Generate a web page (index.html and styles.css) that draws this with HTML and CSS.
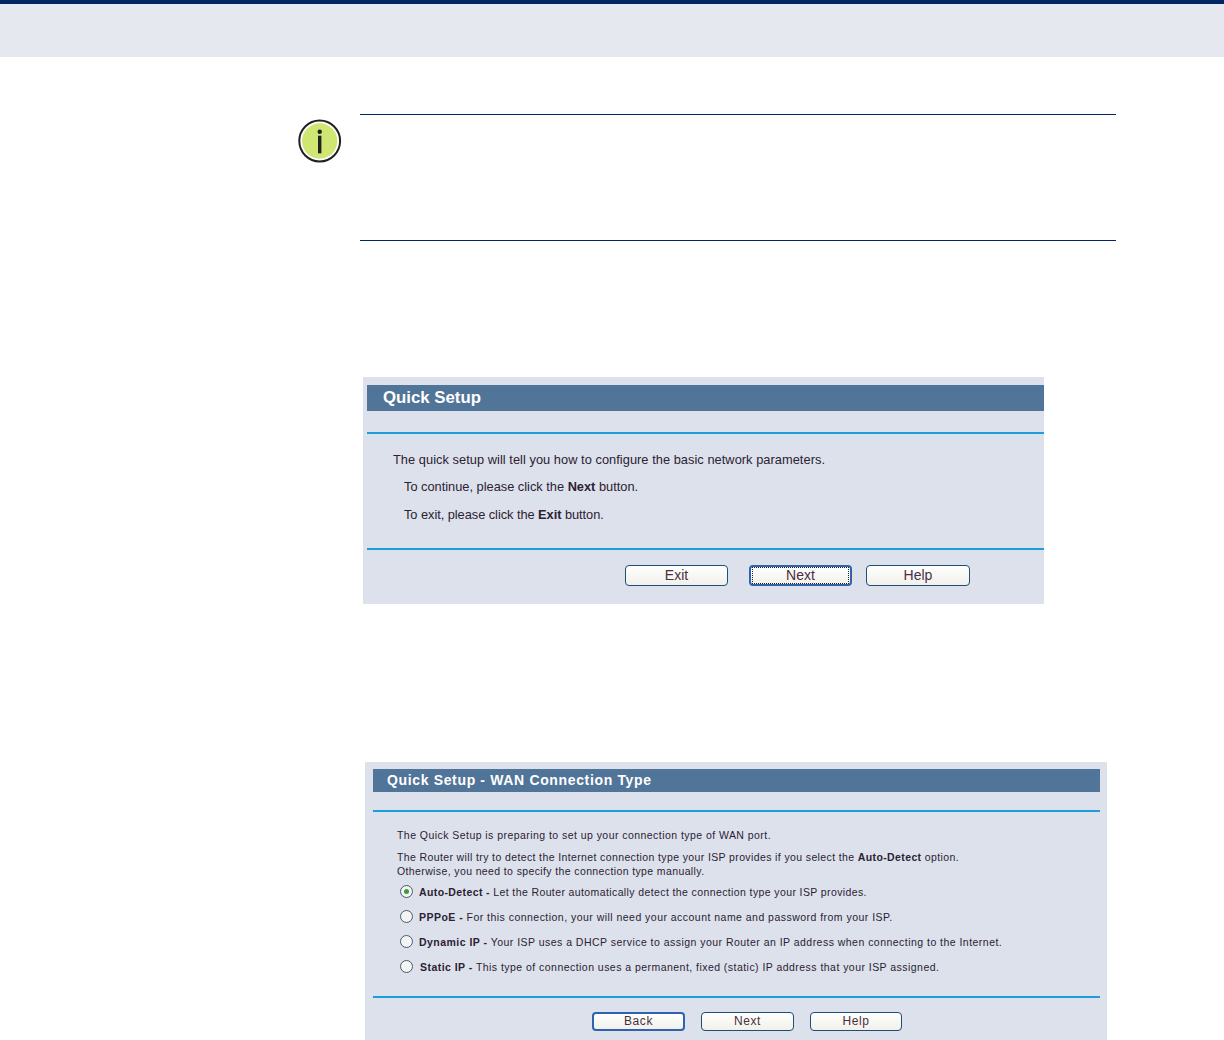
FILE: index.html
```html
<!DOCTYPE html>
<html lang="en">
<head>
<meta charset="utf-8">
<title>Quick Setup</title>
<link rel="stylesheet" href="styles.css">
</head>
<body>
<header class="page-head"></header>
<main class="page">
  <section class="note">
    <svg class="note-icon" width="44" height="44" viewBox="0 0 44 44" aria-hidden="true">
      <circle cx="21.7" cy="22" r="20.4" fill="#fff" stroke="#231f20" stroke-width="2"/>
      <circle cx="21.7" cy="22" r="17.7" fill="#cfe673"/>
      <circle cx="21.7" cy="12.8" r="2.2" fill="#231f20"/>
      <rect x="20" y="16.7" width="3.4" height="17.6" fill="#231f20"/>
    </svg>
    <div class="note-body"></div>
  </section>

  <section class="panel panel-a">
    <h2 class="panel-title">Quick Setup</h2>
    <div class="panel-main">
      <p class="line lead">The quick setup will tell you how to configure the basic network parameters.</p>
      <p class="line sub">To continue, please click the <b>Next</b> button.</p>
      <p class="line sub sub-exit">To exit, please click the <b>Exit</b> button.</p>
    </div>
    <div class="actions">
      <button class="btn" type="button">Exit</button>
      <button class="btn btn-focus" type="button"><span class="focus-ring">Next</span></button>
      <button class="btn btn-help" type="button">Help</button>
    </div>
  </section>

  <section class="panel panel-b">
    <h2 class="panel-title">Quick Setup - WAN Connection Type</h2>
    <div class="panel-main">
      <p class="para">The Quick Setup is preparing to set up your connection type of WAN port.</p>
      <p class="para para-two">The Router will try to detect the Internet connection type your ISP provides if you select the <b>Auto-Detect</b> option.<br>Otherwise, you need to specify the connection type manually.</p>
      <ul class="options">
        <li class="option option-tight"><span class="radio radio-on"></span><span><b>Auto-Detect -</b> Let the Router automatically detect the connection type your ISP provides.</span></li>
        <li class="option"><span class="radio"></span><span><b>PPPoE -</b> For this connection, your will need your account name and password from your ISP.</span></li>
        <li class="option"><span class="radio"></span><span><b>Dynamic IP -</b> Your ISP uses a DHCP service to assign your Router an IP address when connecting to the Internet.</span></li>
        <li class="option option-shift"><span class="radio"></span><span><b>Static IP -</b> This type of connection uses a permanent, fixed (static) IP address that your ISP assigned.</span></li>
      </ul>
    </div>
    <div class="actions">
      <button class="btn btn-default" type="button">Back</button>
      <button class="btn" type="button">Next</button>
      <button class="btn btn-last" type="button">Help</button>
    </div>
  </section>
</main>
</body>
</html>
```
FILE: styles.css
```css
html, body {
  margin: 0;
  padding: 0;
  background: #fff;
}
body {
  height: 1040px;
  overflow: hidden;
  font-family: "Liberation Sans", Arial, sans-serif;
  color: #2b2233;
}
.page-head {
  height: 53px;
  background: #e6e8f0;
  border-top: 4px solid #002663;
}
.page {
  display: flex;
  flex-direction: column;
  align-items: flex-start;
}

/* Note */
.note {
  display: flex;
  margin: 57px 0 0 298px;
}
.note-icon {
  flex: none;
  margin: 5px 18px 0 0;
}
.note-body {
  width: 756px;
  height: 125px;
  border-top: 1px solid #002663;
  border-bottom: 1px solid #002663;
}

/* Panels */
.panel {
  background: #dce1eb;
}
.panel-title {
  margin: 0;
  background: #517499;
  color: #fff;
  font-weight: 700;
}
.panel-main {
  border-top: 2px solid #1b9fd8;
  border-bottom: 2px solid #1b9fd8;
}
.panel-main p {
  margin: 0;
}
.actions {
  display: flex;
}
.btn {
  box-sizing: border-box;
  padding: 0;
  background: linear-gradient(#fff, #f1f0ea);
  border: 1px solid #1f4e79;
  border-radius: 4px;
  color: #4a2f3f;
  font-family: "Liberation Sans", Arial, sans-serif;
}

/* First panel */
.panel-a {
  box-sizing: border-box;
  width: 681px;
  height: 227px;
  margin: 136px 0 0 363px;
  padding: 8px 0 0 4px;
}
.panel-a .panel-title {
  height: 26px;
  padding-left: 16px;
  font-size: 16.8px;
  line-height: 25px;
}
.panel-a .panel-main {
  box-sizing: border-box;
  height: 118px;
  margin-top: 21px;
  padding-top: 12px;
}
.line {
  font-size: 12.8px;
  line-height: 27.3px;
}
.lead {
  padding-left: 26px;
  letter-spacing: 0.05px;
}
.sub {
  padding-left: 37px;
}
.sub-exit {
  letter-spacing: -0.04px;
}
.panel-a .actions {
  margin: 15px 0 0 258px;
}
.panel-a .btn {
  width: 103px;
  height: 21px;
  margin-right: 21px;
  font-size: 14px;
  line-height: 19px;
}
.panel-a .btn-help {
  width: 104px;
  margin-left: -7px;
}
.btn-focus {
  border: 2px solid #2f63b0;
  padding: 0 1px 1px;
}
.focus-ring {
  display: block;
  height: 15px;
  line-height: 15px;
  border: 1px dotted #222;
}

/* Second panel */
.panel-b {
  box-sizing: border-box;
  width: 742px;
  height: 278px;
  margin: 158px 0 0 365px;
  padding: 7px 7px 0 8px;
}
.panel-b .panel-title {
  height: 23px;
  padding-left: 14px;
  font-size: 14px;
  line-height: 23px;
  letter-spacing: 0.65px;
}
.panel-b .panel-main {
  box-sizing: border-box;
  height: 188px;
  margin-top: 18px;
  padding: 16px 0 0 24px;
  font-size: 10.5px;
  letter-spacing: 0.47px;
}
.para {
  line-height: 14px;
  letter-spacing: 0.45px;
}
.para-two {
  margin-top: 8px !important;
  letter-spacing: 0.38px;
}
.options {
  list-style: none;
  margin: 1px 0 0;
  padding: 0;
}
.option {
  display: flex;
  align-items: center;
  height: 25px;
  margin-left: 3px;
  line-height: 14px;
}
.option-tight {
  letter-spacing: 0.39px;
}
.option-shift {
  letter-spacing: 0.46px;
}
.option-shift .radio {
  margin-right: 7px;
}
.radio {
  flex: none;
  box-sizing: border-box;
  width: 13px;
  height: 13px;
  margin-right: 6px;
  border: 1px solid #4a5a70;
  border-radius: 50%;
  background: #f4f4f2;
  display: flex;
  align-items: center;
  justify-content: center;
}
.radio-on::after {
  content: "";
  width: 5px;
  height: 5px;
  border-radius: 50%;
  background: #3f9a3f;
}
.panel-b .actions {
  margin: 14px 0 0 219px;
  gap: 16px;
}
.panel-b .btn {
  width: 93px;
  height: 19px;
  font-size: 12px;
  line-height: 17px;
  letter-spacing: 0.6px;
}
.panel-b .btn-last {
  width: 92px;
}
.panel-b .btn-default {
  border: 2px solid #2f63b0;
  line-height: 15px;
}
```
